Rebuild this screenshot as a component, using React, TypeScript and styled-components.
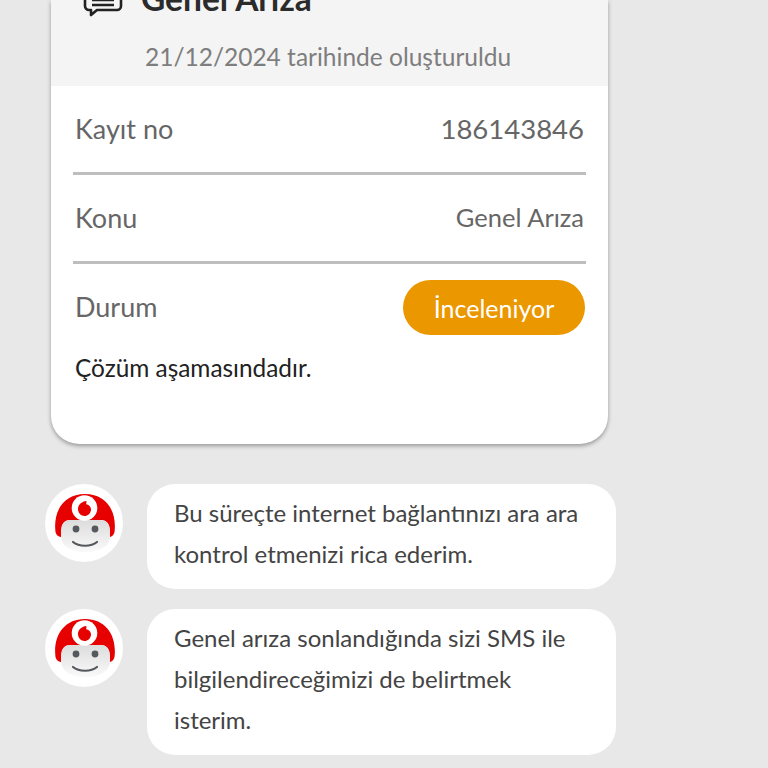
import styled, { createGlobalStyle } from 'styled-components';

const GlobalStyle = createGlobalStyle`
  html, body {
    margin: 0;
    padding: 0;
    background: #e8e8e8;
  }
  body {
    font-family: "Lato", "Liberation Sans", sans-serif;
    overflow: hidden;
  }
`

const Avatar = ({ id }: { id: string }): JSX.Element => (
  <AvatarCircle>
    <svg width="62" height="62" viewBox="0 0 62 62">
      <defs>
        <linearGradient id={id} x1="0" y1="0" x2="0" y2="1">
          <stop offset="0" stopColor="#dcdcdc" />
          <stop offset="1" stopColor="#fafafa" />
        </linearGradient>
      </defs>
      <path d="M2.500 40C0 20 10 2 32 2s32 18 29.500 38c-.5 3-3 5-5.500 5V36c0-5-3-8-8-8H17c-5 0-8 3-8 8v9c-3 0-6-2-6.500-5z" fill="#e60000" />
      <path d="M8 38c0-6 4-10 10-10h29c6 0 10 4 10 10v6c0 10-10 16-24.500 16S8 54 8 44z" fill={`url(#${id})`} />
      <circle cx="31.500" cy="16" r="12.800" fill="#fff" />
      <path d="M33.500 9c-4.800.5-8.500 3.800-8.500 8s3.200 7 6.500 7 6.500-2.700 6.500-6.500c0-3.200-2.200-4.800-4.800-5.300.1-1.100.3-2.200.3-3.200z" fill="#e60000" />
      <circle cx="23" cy="37" r="3.400" fill="#55585c" />
      <circle cx="42" cy="37" r="3.400" fill="#55585c" />
      <path d="M20 50c6 5 18 5 24 0" fill="none" stroke="#55585c" strokeWidth="2.200" strokeLinecap="round" />
    </svg>
  </AvatarCircle>
);

const App = (): JSX.Element => (
  <Page>
    <GlobalStyle />
    <Card>
      <CardHeader>
        <TitleRow>
          <svg width="40" height="28" viewBox="0 0 40 28" fill="none" stroke="#222" strokeWidth="2.600" strokeLinejoin="round">
            <path d="M6 1h28a4 4 0 0 1 4 4v10a4 4 0 0 1-4 4H14l-6 5v-5H6a4 4 0 0 1-4-4V5a4 4 0 0 1 4-4z" fill="#f4f4f4" />
            <path d="M9 9h22M9 14h22" />
          </svg>
          <Title>Genel Arıza</Title>
        </TitleRow>
        <Created>21/12/2024 tarihinde oluşturuldu</Created>
      </CardHeader>
      <CardBody>
        <InfoRow>
          <Label>Kayıt no</Label>
          <Value $size={27.5}>186143846</Value>
        </InfoRow>
        <InfoRow>
          <Label>Konu</Label>
          <Value $size={25.5}>Genel Arıza</Value>
        </InfoRow>
        <StatusRow>
          <Label>Durum</Label>
          <Badge>İnceleniyor</Badge>
        </StatusRow>
        <Note>Çözüm aşamasındadır.</Note>
      </CardBody>
    </Card>
    <Message>
      <Avatar id="face-a" />
      <Bubble>Bu süreçte internet bağlantınızı ara ara kontrol etmenizi rica ederim.</Bubble>
    </Message>
    <Message>
      <Avatar id="face-b" />
      <Bubble>Genel arıza sonlandığında sizi SMS ile bilgilendireceğimizi de belirtmek isterim.</Bubble>
    </Message>
  </Page>
);

export default App;

const Page = styled.div`
  display: flex;
  flex-direction: column;
  height: 768px;
  overflow: hidden;
`
const Card = styled.section`
  flex: none;
  width: 557px;
  height: 444px;
  margin-left: 51px;
  border-radius: 0 0 28px 28px;
  background: #fff;
  box-shadow: 0 2px 4px rgba(0, 0, 0, 0.35);
  overflow: hidden;
`
const CardHeader = styled.header`
  display: flex;
  flex-direction: column;
  justify-content: flex-end;
  box-sizing: border-box;
  height: 86px;
  padding: 0 0 14px 94px;
  background: #f4f4f4;
  overflow: hidden;
`
const TitleRow = styled.div`
  display: flex;
  flex: none;
  align-items: flex-end;
  gap: 18px;
  margin: 0 0 27px -62px;

  svg {
    flex: none;
    margin-bottom: -4px;
  }
`
const Title = styled.h2`
  margin: 0;
  color: #2b2b2b;
  font-size: 33.5px;
  line-height: 34px;
  font-weight: 700;
`
const Created = styled.div`
  flex: none;
  color: #7e7e7e;
  font-size: 24.5px;
  line-height: 30px;
`
const CardBody = styled.div`
  display: flex;
  flex-direction: column;
  padding: 0 22px;
`
const InfoRow = styled.div`
  display: flex;
  align-items: center;
  justify-content: space-between;
  box-sizing: border-box;
  height: 89px;
  padding: 0 2px;
  border-bottom: 3px solid #bebebe;
`
const StatusRow = styled(InfoRow)`
  height: 87px;
  padding: 0 1px 0 2px;
  border-bottom: none;
`
const Label = styled.span`
  margin-bottom: 2px;
  color: #666;
  font-size: 27px;
`
const Value = styled.span<{ $size: number }>`
  margin-bottom: 2px;
  color: #666;
  font-size: ${props => props.$size}px;
`
const Badge = styled.span`
  display: flex;
  align-items: center;
  justify-content: center;
  width: 182px;
  height: 55px;
  border-radius: 28px;
  background: #eb9700;
  color: #fff;
  font-size: 25px;
`
const Note = styled.p`
  margin: 2px 2px 0;
  color: #222;
  font-size: 24.4px;
  line-height: 30px;
`
const Message = styled.div`
  display: flex;
  align-items: flex-start;
  gap: 24px;
  margin: 20px 0 0 45px;

  &:nth-of-type(1) {
    margin-top: 40px;
  }
`
const AvatarCircle = styled.div`
  flex: none;
  display: flex;
  align-items: center;
  justify-content: center;
  width: 78px;
  height: 78px;
  border-radius: 50%;
  background: #fff;
  overflow: hidden;
`
const Bubble = styled.div`
  box-sizing: border-box;
  width: 469px;
  padding: 8px 28px 15px 27px;
  border-radius: 28px;
  background: #fff;
  color: #444;
  font-size: 24px;
  line-height: 41px;
`
